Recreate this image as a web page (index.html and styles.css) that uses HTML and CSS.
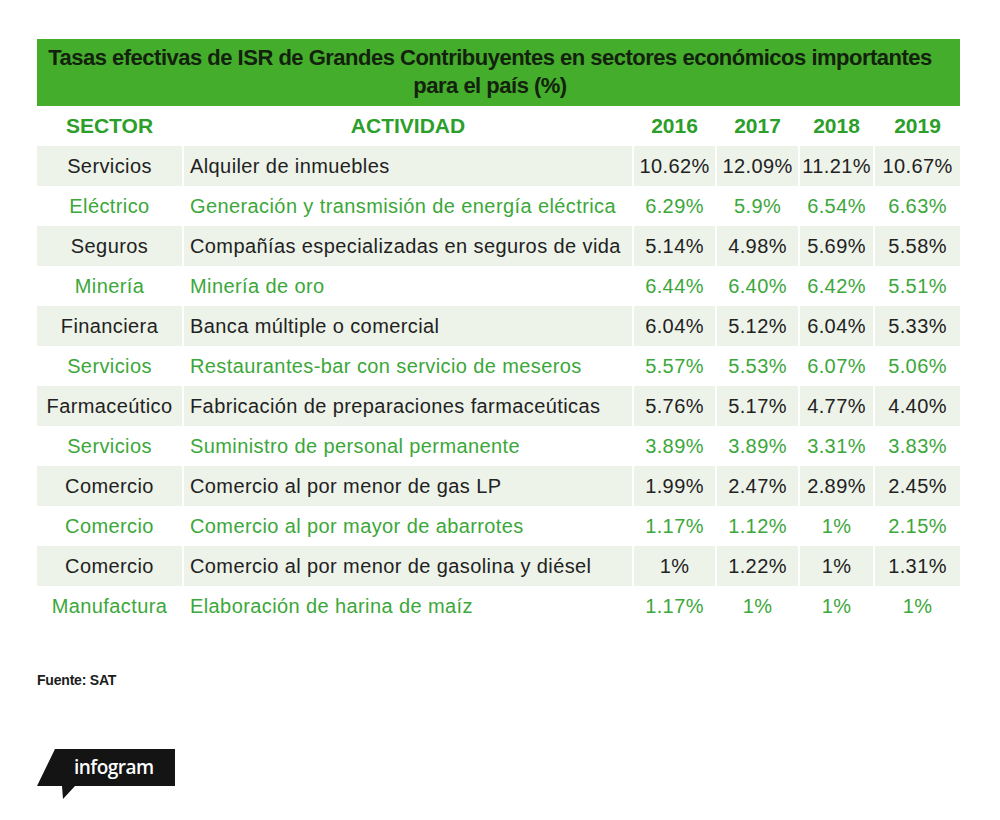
FILE: index.html
```html
<!DOCTYPE html>
<html lang="es">
<head>
<meta charset="utf-8">
<title>Tasas efectivas de ISR</title>
<link rel="stylesheet" href="styles.css">
</head>
<body>
<div class="page">
  <div class="banner">
    <h1 class="title">Tasas efectivas de ISR de Grandes Contribuyentes en sectores económicos importantes<br>para el país (%)</h1>
  </div>
  <div class="table">
    <div class="row head">
      <div class="cell">SECTOR</div>
      <div class="cell">ACTIVIDAD</div>
      <div class="cell">2016</div>
      <div class="cell">2017</div>
      <div class="cell">2018</div>
      <div class="cell">2019</div>
    </div>
    <div class="row shade">
      <div class="cell">Servicios</div>
      <div class="cell act">Alquiler de inmuebles</div>
      <div class="cell">10.62%</div>
      <div class="cell">12.09%</div>
      <div class="cell">11.21%</div>
      <div class="cell">10.67%</div>
    </div>
    <div class="row plain">
      <div class="cell">Eléctrico</div>
      <div class="cell act">Generación y transmisión de energía eléctrica</div>
      <div class="cell">6.29%</div>
      <div class="cell">5.9%</div>
      <div class="cell">6.54%</div>
      <div class="cell">6.63%</div>
    </div>
    <div class="row shade">
      <div class="cell">Seguros</div>
      <div class="cell act">Compañías especializadas en seguros de vida</div>
      <div class="cell">5.14%</div>
      <div class="cell">4.98%</div>
      <div class="cell">5.69%</div>
      <div class="cell">5.58%</div>
    </div>
    <div class="row plain">
      <div class="cell">Minería</div>
      <div class="cell act">Minería de oro</div>
      <div class="cell">6.44%</div>
      <div class="cell">6.40%</div>
      <div class="cell">6.42%</div>
      <div class="cell">5.51%</div>
    </div>
    <div class="row shade">
      <div class="cell">Financiera</div>
      <div class="cell act">Banca múltiple o comercial</div>
      <div class="cell">6.04%</div>
      <div class="cell">5.12%</div>
      <div class="cell">6.04%</div>
      <div class="cell">5.33%</div>
    </div>
    <div class="row plain">
      <div class="cell">Servicios</div>
      <div class="cell act">Restaurantes-bar con servicio de meseros</div>
      <div class="cell">5.57%</div>
      <div class="cell">5.53%</div>
      <div class="cell">6.07%</div>
      <div class="cell">5.06%</div>
    </div>
    <div class="row shade">
      <div class="cell">Farmaceútico</div>
      <div class="cell act">Fabricación de preparaciones farmaceúticas</div>
      <div class="cell">5.76%</div>
      <div class="cell">5.17%</div>
      <div class="cell">4.77%</div>
      <div class="cell">4.40%</div>
    </div>
    <div class="row plain">
      <div class="cell">Servicios</div>
      <div class="cell act">Suministro de personal permanente</div>
      <div class="cell">3.89%</div>
      <div class="cell">3.89%</div>
      <div class="cell">3.31%</div>
      <div class="cell">3.83%</div>
    </div>
    <div class="row shade">
      <div class="cell">Comercio</div>
      <div class="cell act">Comercio al por menor de gas LP</div>
      <div class="cell">1.99%</div>
      <div class="cell">2.47%</div>
      <div class="cell">2.89%</div>
      <div class="cell">2.45%</div>
    </div>
    <div class="row plain">
      <div class="cell">Comercio</div>
      <div class="cell act">Comercio al por mayor de abarrotes</div>
      <div class="cell">1.17%</div>
      <div class="cell">1.12%</div>
      <div class="cell">1%</div>
      <div class="cell">2.15%</div>
    </div>
    <div class="row shade">
      <div class="cell">Comercio</div>
      <div class="cell act">Comercio al por menor de gasolina y diésel</div>
      <div class="cell">1%</div>
      <div class="cell">1.22%</div>
      <div class="cell">1%</div>
      <div class="cell">1.31%</div>
    </div>
    <div class="row plain">
      <div class="cell">Manufactura</div>
      <div class="cell act">Elaboración de harina de maíz</div>
      <div class="cell">1.17%</div>
      <div class="cell">1%</div>
      <div class="cell">1%</div>
      <div class="cell">1%</div>
    </div>
  </div>
  <p class="source">Fuente: SAT</p>
  <div class="logo">
    <svg width="140" height="52" viewBox="0 0 140 52" aria-label="infogram">
      <path d="M18 0 H138 V37 H38 L26 50 L25 37 H0 Z" fill="#141414"/>
      <text x="37" y="25" class="logo-text">infogram</text>
    </svg>
  </div>
</div>
</body>
</html>
```

FILE: styles.css
```css
html, body {
  margin: 0;
  padding: 0;
  background: #ffffff;
}

.page {
  padding: 39px 0 0 37px;
  width: 923px;
  font-family: "Liberation Sans", Arial, sans-serif;
}

.banner {
  background: #45ad2c;
  height: 67px;
  box-sizing: border-box;
  padding: 5px 17px 0 0;
}

.title {
  margin: 0;
  font-size: 22px;
  font-weight: bold;
  line-height: 28px;
  text-align: center;
  color: #13220c;
  letter-spacing: -0.5px;
}

.row {
  display: grid;
  grid-template-columns: 145px 448px 81px 81px 73px 85px;
  column-gap: 2px;
  height: 40px;
}

.cell {
  font-size: 20px;
  line-height: 40px;
  text-align: center;
  white-space: nowrap;
  letter-spacing: 0.4px;
}

.cell.act {
  text-align: left;
  padding-left: 6px;
}

.head .cell {
  font-size: 21px;
  font-weight: bold;
  color: #2b9f2a;
  letter-spacing: 0;
}

.shade .cell {
  background: #edf3e9;
  color: #222222;
}

.plain .cell {
  color: #3ca73a;
}

.source {
  margin: 46px 0 0 0;
  font-size: 14px;
  line-height: 16px;
  font-weight: bold;
  color: #1c1c1c;
  letter-spacing: -0.2px;
}

.logo {
  margin-top: 61px;
  height: 52px;
}

.logo svg {
  display: block;
}

.logo-text {
  font-family: "Open Sans", "DejaVu Sans", sans-serif;
  font-size: 19px;
  font-weight: 600;
  fill: #ffffff;
  letter-spacing: -0.5px;
}
```
